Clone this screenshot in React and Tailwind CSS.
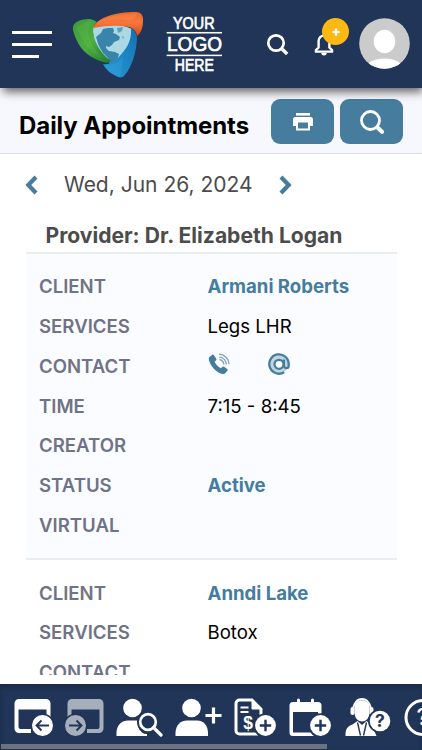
import { useState } from 'react';

const appointments = [
  {
    id: 1,
    client: 'Armani Roberts',
    services: 'Legs LHR',
    hasContact: true,
    time: '7:15 - 8:45',
    creator: '',
    status: 'Active',
    virtual: '',
  },
  {
    id: 2,
    client: 'Anndi Lake',
    services: 'Botox',
    hasContact: false,
  },
];

function GlobeLogo() {
  return (
    <svg width="72" height="68" viewBox="72 11 72 68" aria-hidden="true">
      <defs>
        <linearGradient id="green" x1="0" y1="0" x2="1" y2="1">
          <stop offset="0" stopColor="#3a9a3a" />
          <stop offset="0.5" stopColor="#4fae41" />
          <stop offset="1" stopColor="#1f7a2c" />
        </linearGradient>
        <linearGradient id="orange" x1="0" y1="0" x2="0" y2="1">
          <stop offset="0" stopColor="#ee6a2c" />
          <stop offset="0.45" stopColor="#f8763a" />
          <stop offset="1" stopColor="#cf4a1c" />
        </linearGradient>
        <linearGradient id="blue" x1="0" y1="1" x2="1" y2="0">
          <stop offset="0" stopColor="#2a9bd6" />
          <stop offset="0.5" stopColor="#1c86c6" />
          <stop offset="1" stopColor="#1272b0" />
        </linearGradient>
      </defs>
      <path d="M93 27Q112 20 132 29Q134 45 123 58Q116 65 106 61Q92 47 93 27Z" fill="#acd8e5" />
      <path
        d="M101 33l2-4 5-1 5 0 1 3-1 2 3 1 4 3-1 3-5 2-2 3-3 2-3-1 0 2 3 3 6 1 4 2-1 4-3 4-4 4-2-3-1-5-5-5-3-5-2-4-1-4-1-3z"
        fill="#3a84ab"
      />
      <path d="M117 28l6-1-1 4-4 2zM122 36l2 1-1 2z" fill="#5b9fbd" />
      <path
        d="M73 30C72 23 78 19 90 19Q94 20 97 22Q91 27 94 37C97 47 103 55 111 61Q108 64 103 62C88 57 78 49 73 30Z"
        fill="url(#green)"
      />
      <path d="M76 28Q84 22 92 21Q86 29 90 40Q94 51 103 59Q87 50 80 35Z" fill="#64bd4c" opacity=".3" />
      <path
        d="M93 28C98 17 115 12 136 12Q143 12 143 20C143 28 141 33 137 36Q136 29 129 27Q113 24 93 28Z"
        fill="url(#orange)"
      />
      <path d="M99 22Q113 13.500 137 14Q136 20 128 20.500Q113 18 99 22Z" fill="#ff9458" opacity=".3" />
      <path
        d="M131 28Q136 31 137 37C137 50 132 68 124 76Q121 79 115 75.500Q107 72 103 64Q112 65 118 58C126 49 132 42 131 28Z"
        fill="url(#blue)"
      />
      <path d="M104 65Q114 67 123 57Q122 69 120 77Q111 74 104 65Z" fill="#36a9e1" opacity=".3" />
    </svg>
  );
}

function CompanyLogo() {
  return (
    <svg
      width="56"
      height="58"
      viewBox="166 16 56 58"
      fill="white"
      stroke="white"
      strokeWidth="0.7"
      fontFamily="'Liberation Sans', Arial, sans-serif"
    >
      <text x="173" y="28.700" fontSize="16.5" textLength="41.500" lengthAdjust="spacingAndGlyphs">YOUR</text>
      <rect x="167" y="32.300" width="55" height="0.800" />
      <text x="167" y="51.400" fontSize="20.500" textLength="55" lengthAdjust="spacingAndGlyphs">LOGO</text>
      <rect x="167" y="55" width="55" height="0.800" />
      <text x="174.800" y="71.200" fontSize="16.500" textLength="39" lengthAdjust="spacingAndGlyphs">HERE</text>
    </svg>
  );
}

function BellIcon() {
  return (
    <svg width="20" height="24" viewBox="0 0 20 24" aria-hidden="true">
      <path
        d="M10 1v2.500M4.600 15.500V9a5.400 5.400 0 0 1 10.800 0v6.500L18 18v1.600H2V18z"
        fill="none"
        stroke="white"
        strokeWidth="2.400"
      />
      <path d="M7.300 20.800h5.400a2.700 2.700 0 0 1-5.400 0z" fill="white" />
    </svg>
  );
}

function PrinterIcon() {
  return (
    <svg width="22" height="20" viewBox="0 0 22 20" aria-hidden="true">
      <path d="M4 1h14v2.600H4z" fill="white" />
      <path
        fillRule="evenodd"
        d="M3.500 5h15A2.500 2.500 0 0 1 21 7.500V14h-3v4.500H4V14H1V7.500A2.500 2.500 0 0 1 3.500 5zM6 10.400v6h10v-6z"
        fill="white"
      />
    </svg>
  );
}

function Header() {
  return (
    <header className="relative z-10 flex h-[88px] shrink-0 items-center bg-[#203557] shadow-[2px_5px_9px_-1px_rgba(0,0,0,0.6)]">
      <button className="ml-3 flex w-10 flex-col gap-[9px]" aria-label="Menu">
        <span className="h-[3px] w-10 bg-white" />
        <span className="h-[3px] w-10 bg-white" />
        <span className="h-[3px] w-[27px] bg-white" />
      </button>
      <div className="ml-5 mt-0.5 shrink-0">
        <GlobeLogo />
      </div>
      <div className="ml-[22px] mt-0.5 shrink-0">
        <CompanyLogo />
      </div>
      <button className="ml-[44px] shrink-0" aria-label="Search">
        <svg width="23" height="23" viewBox="0 0 23 23" fill="none" stroke="white" aria-hidden="true">
          <circle cx="10" cy="10" r="7.700" strokeWidth="2.700" />
          <path d="M15.500 15.500l5.700 5.400" strokeWidth="3.400" />
        </svg>
      </button>
      <button className="relative ml-[25px] shrink-0" aria-label="Notifications">
        <BellIcon />
        <span className="absolute -top-[14px] left-[8px] flex size-[27px] items-center justify-center rounded-full bg-[#fdb913]">
          <svg width="8" height="8" viewBox="0 0 8 8" stroke="white" strokeWidth="2.200" aria-hidden="true">
            <path d="M4 .3v7.400M.3 4h7.400" />
          </svg>
        </span>
      </button>
      <svg className="ml-[25px] mt-[-2px] shrink-0" width="51" height="51" viewBox="0 0 51 51" aria-hidden="true">
        <defs>
          <clipPath id="avatar">
            <circle cx="25.500" cy="25.500" r="25.300" />
          </clipPath>
        </defs>
        <g clipPath="url(#avatar)">
          <path d="M0 0h51v51H0z" fill="#cbcbcb" />
          <ellipse cx="25.500" cy="23.500" rx="10.800" ry="11.700" fill="white" />
          <ellipse cx="25.500" cy="51" rx="19" ry="10.600" fill="white" />
        </g>
      </svg>
    </header>
  );
}

function PageTitle() {
  return (
    <div className="flex h-[66px] shrink-0 items-start border-b border-[#d8dbe1] bg-[#f7f8fd] px-[19px] pt-[11px]">
      <h1 className="mt-[9px] whitespace-nowrap text-[24px] leading-9 font-bold tracking-[-0.05px] text-black">
        Daily Appointments
      </h1>
      <div className="ml-auto flex gap-1.5">
        <button className="flex h-[45px] w-[63px] items-center justify-center rounded-[9px] bg-[#467c9e]" aria-label="Print">
          <PrinterIcon />
        </button>
        <button className="flex h-[45px] w-[63px] items-center justify-center rounded-[9px] bg-[#467c9e]" aria-label="Find">
          <svg width="26" height="26" viewBox="0 0 26 26" fill="none" stroke="white" aria-hidden="true">
            <circle cx="11.500" cy="11.500" r="9" strokeWidth="2.800" />
            <path d="M18.500 18.500l4.500 4.200" strokeWidth="4.200" strokeLinecap="round" />
          </svg>
        </button>
      </div>
    </div>
  );
}

function Chevron({ flip }) {
  return (
    <svg
      className={flip ? 'rotate-180' : ''}
      width="13"
      height="20"
      viewBox="0 0 13 20"
      fill="none"
      stroke="#467c9e"
      strokeWidth="4.200"
      aria-hidden="true"
    >
      <path d="M11 2L3.300 10l7.700 8" />
    </svg>
  );
}

function ContactIcons() {
  return (
    <div className="-mt-[6px] flex items-center gap-[38px]">
      <svg width="22" height="22" viewBox="0 0 22 22" aria-hidden="true">
        <path
          d="M1.200 4.300L4.300 1.800Q5.200 1.300 5.900 2.200L8.300 5.800Q8.700 6.700 8 7.400L6.500 8.800C8 11.600 10 13.700 12.900 15.300L14.500 13.700Q15.200 13.100 16.100 13.700L19.300 16.100Q20 16.900 19.300 17.800L17.300 20.200C15.500 22 10.300 20.300 6.300 16.200S-.2 6.300 1.200 4.300z"
          fill="#467c9e"
        />
        <path
          d="M11.500 6.500a5.500 5.500 0 0 1 4.300 5M11.300 3.800a8 8 0 0 1 7 7.800M11 1.200c5.500.2 9.800 4.500 10 9.800"
          fill="none"
          stroke="#7da3bb"
          strokeWidth="1.300"
        />
      </svg>
      <svg width="22" height="22" viewBox="0 0 22 22" fill="none" stroke="#467c9e" aria-hidden="true">
        <circle cx="11" cy="11" r="9.500" fill="#c3d5e0" stroke="none" />
        <path d="M16.200 19.200A9.700 9.700 0 1 1 20.700 11v1.500c0 3.600-4.800 3.600-4.800 0V6.500" strokeWidth="2.300" />
        <circle cx="11" cy="11.300" r="4.500" fill="white" strokeWidth="2.300" />
      </svg>
    </div>
  );
}

function Row({ label, children, link }) {
  return (
    <div className="flex h-[39.75px] items-center">
      <div className="w-[168.5px] shrink-0 font-semibold text-[#6f7386]">{label}</div>
      <div className={link ? 'font-bold text-[#467c9e]' : 'text-black'}>{children}</div>
    </div>
  );
}

function AppointmentCard({ appointment, shaded }) {
  return (
    <div className={`border-b-2 border-[#e9ecf0] px-[13px] pt-[13.5px] pb-[12.5px] ${shaded ? 'bg-[#fbfcff]' : 'bg-white'}`}>
      <Row label="CLIENT" link>{appointment.client}</Row>
      <Row label="SERVICES">{appointment.services}</Row>
      <Row label="CONTACT">{appointment.hasContact && <ContactIcons />}</Row>
      <Row label="TIME">{appointment.time}</Row>
      <Row label="CREATOR">{appointment.creator}</Row>
      <Row label="STATUS" link>{appointment.status}</Row>
      <Row label="VIRTUAL">{appointment.virtual}</Row>
    </div>
  );
}

function WindowIcon({ forward }) {
  return (
    <svg className={forward ? 'opacity-60' : ''} width="39" height="39" viewBox="0 0 39 39" aria-hidden="true">
      <g transform={forward ? 'translate(39 0) scale(-1 1)' : undefined}>
        <path
          fillRule="evenodd"
          d="M5 1h27a4.500 4.500 0 0 1 4.500 4.500V19h-4v-7.500H4.500V29Q4.500 31 6.500 31H17v4H5a4.500 4.500 0 0 1-4.500-4.500v-25A4.500 4.500 0 0 1 5 1z"
          fill="white"
        />
        <circle cx="28.500" cy="27.500" r="12" fill="#203557" />
        <circle cx="28.500" cy="27.500" r="10.500" fill="white" />
        <path d="M35 27.500H22.500M27.500 22.500l-5 5 5 5" fill="none" stroke="#203557" strokeWidth="1.900" />
      </g>
    </svg>
  );
}

function ClientSearchIcon() {
  return (
    <svg width="47" height="39" viewBox="0 0 47 39" fill="white" aria-hidden="true">
      <circle cx="16.500" cy="10" r="9.300" />
      <path d="M.5 38V35C.5 27 6 22.500 12 22.500h10Q20.500 30 26 34.500Q28 36 31 36v2z" />
      <circle cx="32" cy="24" r="11" fill="#203557" />
      <circle cx="32" cy="24" r="7.800" fill="none" stroke="white" strokeWidth="2.700" />
      <path d="M37.500 29.500l7.500 7.500" stroke="white" strokeWidth="3.200" strokeLinecap="round" />
    </svg>
  );
}

function ClientAddIcon() {
  return (
    <svg width="47" height="39" viewBox="0 0 47 39" fill="white" aria-hidden="true">
      <circle cx="16.500" cy="10" r="9.300" />
      <path d="M.5 38V35C.5 27 6 22.500 12 22.500h10c6 0 11 4.500 11 12.500v3z" />
      <path d="M38.500 9.500v16M30.500 17.500h16" stroke="white" strokeWidth="3.200" />
    </svg>
  );
}

function PlusBadge() {
  return (
    <>
      <circle cx="31.500" cy="27.500" r="12.200" fill="#203557" stroke="none" />
      <circle cx="31.500" cy="27.500" r="10.400" fill="white" stroke="none" />
      <path d="M31.500 21.800v11.400M25.800 27.500h11.400" stroke="#203557" strokeWidth="2.400" />
    </>
  );
}

function InvoiceAddIcon() {
  return (
    <svg width="43" height="39" viewBox="0 0 43 39" fill="none" stroke="white" aria-hidden="true">
      <path d="M24 36H5.500A3.500 3.500 0 0 1 2 32.500v-27A3.500 3.500 0 0 1 5.500 2H18l9 9v9" strokeWidth="3" />
      <path d="M18 1v10h10z" fill="white" strokeWidth="1" />
      <path d="M6.500 9.500h8M6.500 14h8" strokeWidth="2" />
      <PlusBadge />
      <text
        x="9.300"
        y="31"
        fill="white"
        stroke="none"
        fontSize="17.500"
        fontWeight="700"
        fontFamily="'Liberation Sans', Arial, sans-serif"
      >
        $
      </text>
    </svg>
  );
}

function CalendarAddIcon() {
  return (
    <svg width="43" height="39" viewBox="0 0 43 39" fill="white" aria-hidden="true">
      <path
        fillRule="evenodd"
        d="M4 4h4V2Q8 .5 9.500.5T11 2v2h11V2Q22 .5 23.500.5T25 2v2h4a3.500 3.500 0 0 1 3.500 3.500V38H4a3.500 3.500 0 0 1-3.500-3.500v-27A3.500 3.500 0 0 1 4 4zM4 14v20.500h25V14z"
      />
      <PlusBadge />
    </svg>
  );
}

function SupportIcon() {
  return (
    <svg width="47" height="39" viewBox="0 0 47 39" fill="white" aria-hidden="true">
      <path d="M8 13C8-3 26-3 26 13" fill="none" stroke="white" strokeWidth="1.800" />
      <path d="M9.500 9C10 0 24 0 24.500 9v6c0 5-4 8.500-7.500 8.500S9.500 20 9.500 15z" />
      <rect x="5.500" y="9" width="4" height="8" rx="2" />
      <rect x="24.500" y="9" width="4" height="8" rx="2" />
      <path d="M.5 38c0-7 1.500-9.500 7-11.500L12.500 23l4.500 4 4.500-4 5 3.500 5 11.500z" />
      <path d="M12.500 24.500l3 13M21.500 24.500l-3 13" stroke="#203557" strokeWidth="1.400" />
      <circle cx="35" cy="23" r="12" fill="#203557" />
      <circle cx="35" cy="23" r="10.300" />
      <text x="30" y="29.300" fill="#203557" fontSize="17.500" fontWeight="700" fontFamily="Inter, sans-serif">
        ?
      </text>
    </svg>
  );
}

function HelpIcon() {
  return (
    <svg width="38" height="39" viewBox="0 0 38 39" aria-hidden="true">
      <circle cx="19" cy="19.500" r="17" fill="none" stroke="white" strokeWidth="3" />
      <text x="12.500" y="27" fill="white" fontSize="23" fontWeight="500" fontFamily="Inter, sans-serif">?</text>
    </svg>
  );
}

function Toolbar() {
  return (
    <nav className="flex h-[66px] shrink-0 flex-col overflow-hidden bg-[#203557] shadow-[inset_0_3px_5px_rgba(0,0,0,0.2)]">
      <div className="flex h-[60px] items-start gap-[12.2px] pl-[13.5px] pt-[14px] [&>svg]:shrink-0">
        <WindowIcon />
        <WindowIcon forward />
        <ClientSearchIcon />
        <ClientAddIcon />
        <InvoiceAddIcon />
        <CalendarAddIcon />
        <SupportIcon />
        <HelpIcon />
      </div>
      <div className="ml-px h-[5px] w-[326px] bg-[#6b7280]" />
    </nav>
  );
}

function App() {
  const [date] = useState('Wed, Jun 26, 2024');

  return (
    <div className="flex h-[750px] w-[422px] flex-col overflow-hidden bg-white font-['Inter',sans-serif]">
      <Header />
      <PageTitle />

      <main className="mb-[9px] min-h-0 flex-1 overflow-hidden">
        {/* Date picker */}
        <div className="flex h-[61px] items-center pl-[25px] text-[21px] text-[#4c4c4c]">
          <button aria-label="Previous day">
            <Chevron />
          </button>
          <span className="ml-[26px] whitespace-nowrap">{date}</span>
          <button className="ml-[26px]" aria-label="Next day">
            <Chevron flip />
          </button>
        </div>

        <section className="ml-[26px] mr-[25px]">
          <h2 className="flex h-[39px] items-center whitespace-nowrap border-b-2 border-[#e9ecf0] pl-[19.5px] pt-1 text-[21.1px] font-bold text-[#4c4c4c]">
            Provider: Dr. Elizabeth Logan
          </h2>
          <div className="text-[18.6px]">
            {appointments.map((a, i) => (
              <AppointmentCard key={a.id} appointment={a} shaded={i % 2 === 0} />
            ))}
          </div>
        </section>
      </main>

      <Toolbar />
    </div>
  );
}

export default App;
